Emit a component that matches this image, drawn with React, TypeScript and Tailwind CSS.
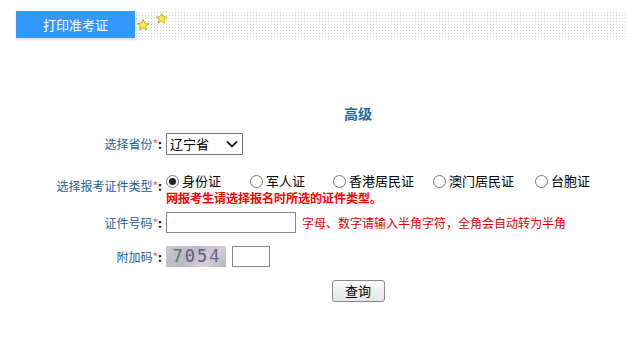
import { useState } from "react";

const CARD_TYPES = ["身份证", "军人证", "香港居民证", "澳门居民证", "台胞证"];
const RADIO_GAPS = ["w-[84px]", "w-[83px]", "w-[100px]", "w-[102px]", "w-auto"];

function Star({ className }: { className: string }) {
  return (
    <svg viewBox="0 0 24 24" className={className}>
      <path
        d="M12 2.5l2.9 6.1 6.6.8-4.9 4.5 1.3 6.6L12 17.2l-5.9 3.3 1.3-6.6-4.9-4.5 6.6-.8z"
        fill="#f7e84a"
        stroke="#b9a820"
        strokeWidth="1.6"
        strokeLinejoin="round"
      />
    </svg>
  );
}

function Label({ text }: { text: string }) {
  return (
    <div className="w-[162px] shrink-0 text-right text-[12px] text-[#1e5f99]">
      {text}
      <span className="text-[12px] text-[#f06060]">*</span>
      <span className="font-bold text-black">:</span>
    </div>
  );
}

export default function App() {
  const [cardType, setCardType] = useState("身份证");

  return (
    <div className="h-[346px] w-[626px] bg-white font-['Noto_Sans_CJK_SC',sans-serif]">
      <div className="flex pt-[11px]">
        <div className="ml-4 flex h-[27px] w-[119px] items-center justify-center bg-[#3399ff] text-[13px] text-white shadow-[0_2px_2px_rgba(0,0,0,0.12)]">
          打印准考证
        </div>
        <div className="relative h-[28px] flex-1 bg-[radial-gradient(circle,#cfcfcf_0.7px,transparent_0.9px)] bg-[length:3px_3px]">
          <Star className="absolute left-[1px] top-[7px] h-[14px] w-[14px]" />
          <Star className="absolute left-[20px] top-[1px] h-[13px] w-[13px]" />
        </div>
      </div>

      <div className="mt-[64px] text-center">
        <div className="ml-[90px] text-[14px] font-bold leading-[20px] text-[#1b6aa5]">高级</div>
      </div>

      <div className="mt-[10px] flex h-[22px] items-center">
        <Label text="选择省份" />
        <div className="ml-[4px] flex h-[22px] w-[77px] items-center justify-between border border-[#777] pl-[3px] pr-[4px] text-[13px] text-black">
          <span>辽宁省</span>
          <svg viewBox="0 0 12 8" className="h-[8px] w-[12px]">
            <path d="M1 1.5l5 5 5-5" fill="none" stroke="#222" strokeWidth="1.8" />
          </svg>
        </div>
      </div>

      <div className="mt-[16px] flex items-start">
        <div className="pt-[6px]">
          <Label text="选择报考证件类型" />
        </div>
        <div className="ml-[4px]">
          <div className="flex h-[20px] items-center">
            {CARD_TYPES.map((t, i) => (
              <label key={t} className={`flex items-center text-[13px] text-black ${RADIO_GAPS[i]}`}>
                <span
                  className="mr-[3px] flex h-[13px] w-[13px] items-center justify-center rounded-full border border-[#777] bg-white"
                  onClick={() => setCardType(t)}
                >
                  {cardType === t && <span className="h-[7px] w-[7px] rounded-full bg-[#222]" />}
                </span>
                {t}
              </label>
            ))}
          </div>
          <div className="text-[12px] font-bold leading-[14px] text-[#ff0000]">
            网报考生请选择报名时所选的证件类型。
          </div>
        </div>
      </div>

      <div className="mt-[7px] flex h-[21px] items-center">
        <Label text="证件号码" />
        <div className="ml-[4px] h-[21px] w-[130px] border border-[#888]" />
        <span className="ml-[6px] text-[12px] text-[#e00000]">
          字母、数字请输入半角字符，全角会自动转为半角
        </span>
      </div>

      <div className="mt-[12px] flex h-[23px] items-center">
        <Label text="附加码" />
        <div className="ml-[4px] flex h-[21px] w-[60px] items-center justify-center gap-[2px] bg-[linear-gradient(135deg,#cdc7d0,#bcb9c4_40%,#d6d0d6_70%,#b4b6be)] font-['DejaVu_Sans_Mono',monospace] text-[17px] leading-none">
          <span className="text-[#4f7a5a]">7</span>
          <span className="text-[#5a5f7a]">0</span>
          <span className="text-[#5c5a88]">5</span>
          <span className="text-[#65678a]">4</span>
        </div>
        <div className="ml-[6px] h-[21px] w-[38px] border border-[#888]" />
      </div>

      <div className="mt-[12px] flex justify-center">
        <button className="ml-[90px] h-[22px] w-[53px] rounded-[3px] border border-[#8a8a8a] bg-[linear-gradient(#fbfbfb,#e4e4e4)] text-[13px] text-black">
          查询
        </button>
      </div>
    </div>
  );
}
